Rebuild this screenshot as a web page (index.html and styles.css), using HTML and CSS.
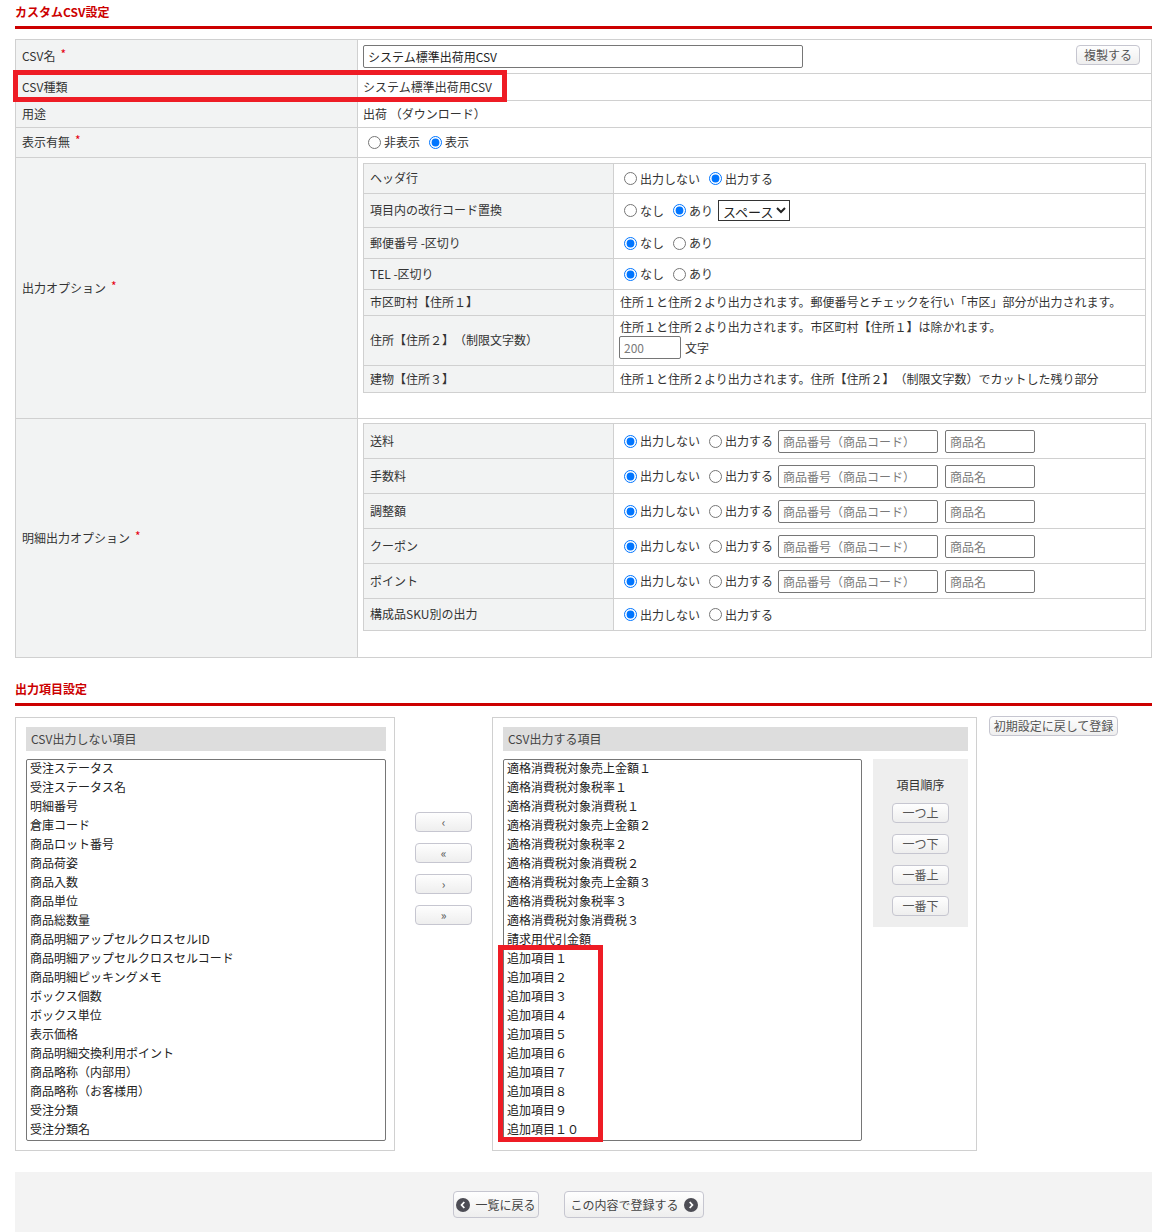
FILE: index.html
```html
<!DOCTYPE html>
<html lang="ja">
<head>
<meta charset="utf-8">
<title>カスタムCSV設定</title>
<link rel="stylesheet" href="styles.css">
</head>
<body>
<div class="page">
  <h2 class="sec-title">カスタムCSV設定</h2>
  <table class="form">
    <colgroup><col class="c-label"><col></colgroup>
    <tr class="r34">
      <th>CSV名<span class="req">*</span></th>
      <td class="val"><div class="name-row"><input class="txt name" type="text" value="システム標準出荷用CSV"><button class="btn copy">複製する</button></div></td>
    </tr>
    <tr class="r27"><th>CSV種類</th><td class="val">システム標準出荷用CSV</td></tr>
    <tr class="r27"><th>用途</th><td class="val">出荷 （ダウンロード）</td></tr>
    <tr class="r30"><th>表示有無<span class="req">*</span></th><td class="val"><div class="opts"><label class="rd"><input type="radio" name="disp">非表示</label><label class="rd"><input type="radio" name="disp" checked>表示</label></div></td></tr>
    <tr>
      <th>出力オプション<span class="req">*</span></th>
      <td class="nest">
        <table class="inner">
          <colgroup><col class="c-ilabel"><col></colgroup>
          <tr class="h30"><th>ヘッダ行</th><td><div class="opts"><label class="rd"><input type="radio" name="hdr">出力しない</label><label class="rd"><input type="radio" name="hdr" checked>出力する</label></div></td></tr>
          <tr class="h34"><th>項目内の改行コード置換</th><td><div class="opts"><label class="rd"><input type="radio" name="nl">なし</label><label class="rd"><input type="radio" name="nl" checked>あり</label><select class="sel"><option>スペース</option></select></div></td></tr>
          <tr class="h31"><th>郵便番号 -区切り</th><td><div class="opts"><label class="rd"><input type="radio" name="zip" checked>なし</label><label class="rd"><input type="radio" name="zip">あり</label></div></td></tr>
          <tr class="h31"><th>TEL -区切り</th><td><div class="opts"><label class="rd"><input type="radio" name="tel" checked>なし</label><label class="rd"><input type="radio" name="tel">あり</label></div></td></tr>
          <tr class="h26"><th>市区町村【住所１】</th><td class="txtcell">住所１と住所２より出力されます。郵便番号とチェックを行い「市区」部分が出力されます。</td></tr>
          <tr class="h50"><th>住所【住所２】（制限文字数）</th><td class="addr"><div class="line">住所１と住所２より出力されます。市区町村【住所１】は除かれます。</div><div class="opts"><input class="txt num" type="text" placeholder="200"><span class="unit">文字</span></div></td></tr>
          <tr class="h27"><th>建物【住所３】</th><td class="txtcell">住所１と住所２より出力されます。住所【住所２】（制限文字数）でカットした残り部分</td></tr>
        </table>
      </td>
    </tr>
    <tr>
      <th>明細出力オプション<span class="req">*</span></th>
      <td class="nest nest2">
        <table class="inner">
          <colgroup><col class="c-ilabel"><col></colgroup>
          <tr class="h35"><th>送料</th><td><div class="opts"><label class="rd"><input type="radio" name="d1" checked>出力しない</label><label class="rd"><input type="radio" name="d1">出力する</label><input class="txt code" type="text" placeholder="商品番号（商品コード）"><input class="txt pname" type="text" placeholder="商品名"></div></td></tr>
          <tr class="h35"><th>手数料</th><td><div class="opts"><label class="rd"><input type="radio" name="d2" checked>出力しない</label><label class="rd"><input type="radio" name="d2">出力する</label><input class="txt code" type="text" placeholder="商品番号（商品コード）"><input class="txt pname" type="text" placeholder="商品名"></div></td></tr>
          <tr class="h35"><th>調整額</th><td><div class="opts"><label class="rd"><input type="radio" name="d3" checked>出力しない</label><label class="rd"><input type="radio" name="d3">出力する</label><input class="txt code" type="text" placeholder="商品番号（商品コード）"><input class="txt pname" type="text" placeholder="商品名"></div></td></tr>
          <tr class="h35"><th>クーポン</th><td><div class="opts"><label class="rd"><input type="radio" name="d4" checked>出力しない</label><label class="rd"><input type="radio" name="d4">出力する</label><input class="txt code" type="text" placeholder="商品番号（商品コード）"><input class="txt pname" type="text" placeholder="商品名"></div></td></tr>
          <tr class="h35"><th>ポイント</th><td><div class="opts"><label class="rd"><input type="radio" name="d5" checked>出力しない</label><label class="rd"><input type="radio" name="d5">出力する</label><input class="txt code" type="text" placeholder="商品番号（商品コード）"><input class="txt pname" type="text" placeholder="商品名"></div></td></tr>
          <tr class="h32"><th>構成品SKU別の出力</th><td><div class="opts"><label class="rd"><input type="radio" name="d6" checked>出力しない</label><label class="rd"><input type="radio" name="d6">出力する</label></div></td></tr>
        </table>
      </td>
    </tr>
  </table>

  <h2 class="sec-title sec2">出力項目設定</h2>
  <div class="items">
    <div class="panel left">
      <div class="panel-head">CSV出力しない項目</div>
      <div class="listbox wide">
        <div>受注ステータス</div><div>受注ステータス名</div><div>明細番号</div><div>倉庫コード</div><div>商品ロット番号</div><div>商品荷姿</div><div>商品入数</div><div>商品単位</div><div>商品総数量</div><div>商品明細アップセルクロスセルID</div><div>商品明細アップセルクロスセルコード</div><div>商品明細ピッキングメモ</div><div>ボックス個数</div><div>ボックス単位</div><div>表示価格</div><div>商品明細交換利用ポイント</div><div>商品略称（内部用）</div><div>商品略称（お客様用）</div><div>受注分類</div><div>受注分類名</div>
      </div>
    </div>
    <div class="movers">
      <button class="btn mv">&lsaquo;</button>
      <button class="btn mv">&laquo;</button>
      <button class="btn mv">&rsaquo;</button>
      <button class="btn mv">&raquo;</button>
    </div>
    <div class="panel right">
      <div class="panel-head">CSV出力する項目</div>
      <div class="panel-body">
        <div class="listbox">
          <div>適格消費税対象売上金額１</div><div>適格消費税対象税率１</div><div>適格消費税対象消費税１</div><div>適格消費税対象売上金額２</div><div>適格消費税対象税率２</div><div>適格消費税対象消費税２</div><div>適格消費税対象売上金額３</div><div>適格消費税対象税率３</div><div>適格消費税対象消費税３</div><div>請求用代引金額</div><div>追加項目１</div><div>追加項目２</div><div>追加項目３</div><div>追加項目４</div><div>追加項目５</div><div>追加項目６</div><div>追加項目７</div><div>追加項目８</div><div>追加項目９</div><div>追加項目１０</div>
        </div>
        <div class="order">
          <div class="order-title">項目順序</div>
          <button class="btn ord">一つ上</button>
          <button class="btn ord">一つ下</button>
          <button class="btn ord">一番上</button>
          <button class="btn ord">一番下</button>
        </div>
      </div>
    </div>
    <button class="btn reset">初期設定に戻して登録</button>
  </div>

  <div class="footer">
    <button class="btn fbtn back"><svg class="ic" viewBox="0 0 14 14" width="14" height="14"><circle cx="7" cy="7" r="7" fill="#4d4d55"/><path d="M8.3 4 L5.6 7 L8.3 10" fill="none" stroke="#fff" stroke-width="1.8"/></svg>一覧に戻る</button>
    <button class="btn fbtn save">この内容で登録する<svg class="ic" viewBox="0 0 14 14" width="14" height="14"><circle cx="7" cy="7" r="7" fill="#4d4d55"/><path d="M5.7 4 L8.4 7 L5.7 10" fill="none" stroke="#fff" stroke-width="1.8"/></svg></button>
  </div>
</div>
<div class="mark mark1"></div>
<div class="mark mark2"></div>
</body>
</html>
```
FILE: styles.css
```css
* { box-sizing: border-box; }
html, body { margin: 0; padding: 0; }
body {
  font-family: "Noto Sans CJK JP", "Noto Sans", sans-serif;
  font-size: 12px;
  line-height: 18px;
  color: #333;
  background: #fff;
  position: relative;
  text-spacing-trim: space-all;
}
.page { width: 1137px; margin-left: 15px; padding-top: 3px; }
.sec-title {
  margin: 0;
  color: #c00;
  font-size: 12px;
  font-weight: bold;
  line-height: 16px;
  padding: 1px 0 6px;
  border-bottom: 3px solid #c00;
}
.sec2 { margin-top: 22px; }

/* main form table */
.form { width: 100%; border-collapse: collapse; margin-top: 10px; }
.form .c-label { width: 342px; }
.form > tbody > tr > th,
.form > tbody > tr > td { border: 1px solid #d0d0d0; vertical-align: middle; }
.form > tbody > tr > th {
  background: #f2f3f3;
  font-weight: normal;
  text-align: left;
  padding: 0 6px 1px;
}
.form .val { padding: 0 5px 1px; }
.r34 > th { height: 34px; }
.r27 > th { height: 27px; }
.r30 > th { height: 30px; }
.req { color: #e60012; margin-left: 5px; position: relative; top: -2px; font-size: 12px; }

.name-row { display: flex; align-items: flex-start; justify-content: space-between; padding-right: 6px; }
.txt {
  font-family: inherit;
  font-size: 12px;
  height: 23px;
  border: 1px solid #767676;
  border-radius: 2px;
  padding: 0 4px;
  color: #222;
  background: #fff;
}
.txt::placeholder { color: #7a7a7a; }
.name { width: 440px; }

.btn {
  font-family: inherit;
  font-size: 12px;
  color: #555;
  background: linear-gradient(#fefefe, #eeeeee);
  border: 1px solid #c6c6d0;
  border-radius: 4px;
  height: 20px;
  line-height: 18px;
  padding: 0;
  cursor: pointer;
}
.copy { width: 64px; }

.opts { display: flex; align-items: center; }
.rd { display: inline-flex; align-items: center; margin-right: 4px; white-space: nowrap; }
.rd input { margin: 0 3px 0 5px; width: 13px; height: 13px; }

/* nested tables */
.form .nest { padding: 5px 5px 25px 5px; vertical-align: top; }
.form .nest2 { padding-top: 4px; padding-bottom: 26px; }
.inner { width: 100%; border-collapse: collapse; }
.inner .c-ilabel { width: 250px; }
.inner th, .inner td { border: 1px solid #d0d0d0; vertical-align: middle; }
.inner th { background: #f2f3f3; font-weight: normal; text-align: left; padding: 0 6px 1px; }
.inner td { padding: 0 5px; }
.inner .txtcell { padding-left: 6px; padding-bottom: 1px; }
.h30 > th { height: 30px; }
.h34 > th { height: 34px; }
.h31 > th { height: 31px; }
.h26 > th { height: 26px; }
.h27 > th { height: 27px; }
.h50 > th { height: 50px; }
.h35 > th { height: 35px; }
.h32 > th { height: 32px; }
.sel {
  font-family: inherit;
  font-size: 13px;
  height: 21px;
  width: 72px;
  margin-left: 1px;
  border: 1px solid #333;
  border-radius: 0;
  color: #222;
  background: #fff;
}
.addr { padding: 1px 5px 5px 5px !important; }
.addr .line { padding-left: 1px; }
.num { width: 62px; }
.unit { margin-left: 4px; }
.code { width: 160px; margin-left: 1px; }
.pname { width: 90px; margin-left: 7px; }

/* output items */
.items { display: flex; align-items: flex-start; margin-top: 11px; }
.panel { border: 1px solid #d0d0d0; padding: 9px 8px 9px 10px; }
.panel.left { width: 380px; }
.panel.right { width: 485px; margin-left: 20px; }
.panel-head { background: #dddddd; height: 24px; line-height: 23px; padding-left: 5px; color: #444; }
.listbox {
  margin-top: 8px;
  height: 382px;
  border: 1px solid #767676;
  border-radius: 2px;
  padding: 0 3px;
  color: #222;
  overflow: hidden;
  line-height: 19px;
  background: #fff;
}
.listbox > div:first-child { margin-top: -2px; }
.listbox.wide { width: 360px; }
.panel-body { display: flex; align-items: flex-start; }
.panel-body .listbox { width: 359px; }
.order {
  margin-top: 8px;
  margin-left: 11px;
  width: 95px;
  height: 168px;
  background: #eeeeee;
  display: flex;
  flex-direction: column;
  align-items: center;
}
.order-title { margin-top: 17px; line-height: 18px; color: #333; margin-bottom: 9px; }
.ord { width: 57px; margin-bottom: 11px; }
.movers { display: flex; flex-direction: column; margin-left: 20px; padding-top: 95px; }
.mv { width: 57px; margin-bottom: 11px; font-size: 12px; color: #555; }
.reset { width: 129px; margin-left: 12px; margin-top: -1px; }

/* footer */
.footer {
  margin-top: 21px;
  background: #f3f3f3;
  display: flex;
  justify-content: center;
  gap: 25px;
  padding: 19px 0 20px 0;
}
.fbtn {
  height: 27px;
  display: inline-flex;
  align-items: center;
  justify-content: center;
  gap: 5px;
  color: #444;
}
.back { width: 86px; margin-left: -10px; }
.save { width: 140px; }
.ic { flex: none; }

/* annotation marks */
.mark { position: absolute; border: 5px solid #ee1c25; pointer-events: none; }
.mark1 { left: 13px; top: 70px; width: 494px; height: 32px; }
.mark2 { left: 498px; top: 945px; width: 105px; height: 197px; }
```
